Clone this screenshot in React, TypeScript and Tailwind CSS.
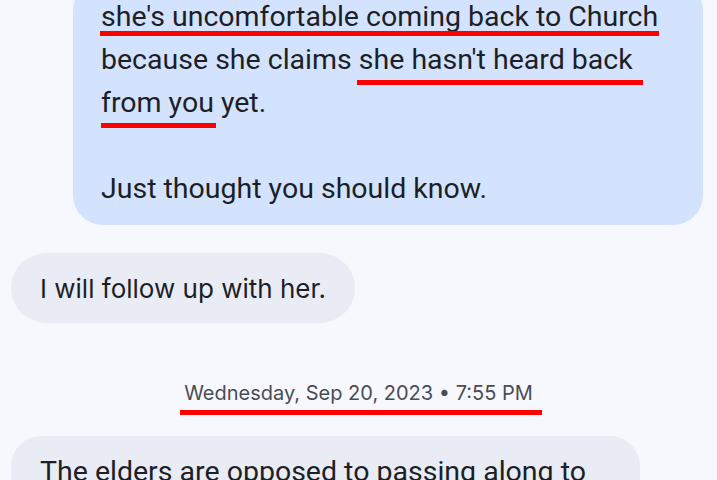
import React from "react";

const Bar = ({ className }: { className: string }) => (
  <span className={`absolute h-[5px] bg-[#ff0000] ${className}`} />
);

export default function App() {
  return (
    <div className="w-[717px] h-[480px] overflow-hidden bg-[#f7f8fd] text-[#1d1f26]">
      <div className="flex justify-end pr-[14px]">
        <div
          className="w-[630px] -mt-[20px] rounded-[30px] bg-[#d3e3fd] pl-[28px] pt-[15px] pb-[15px] text-[28.5px] leading-[43px]"
          style={{ fontFamily: "Roboto, sans-serif" }}
        >
          <div className="relative w-fit">
            she's uncomfortable coming back to Church
            <Bar className="left-[-1px] right-[-1px] top-[36px]" />
          </div>
          <div>
            because she claims{" "}
            <span className="relative">
              she hasn't heard back
              <Bar className="left-[-2px] right-[-10px] top-[37px]" />
            </span>
          </div>
          <div>
            <span className="relative">
              from you
              <Bar className="left-0 right-[-2px] top-[37px]" />
            </span>{" "}
            yet.
          </div>
          <div className="h-[43px]" />
          <div>Just thought you should know.</div>
        </div>
      </div>

      <div className="mt-[28px] pl-[11px]">
        <div
          className="inline-flex h-[70px] items-center rounded-full bg-[#e9ecf4] px-[29px] text-[26px]"
          style={{ fontFamily: "Inter, sans-serif" }}
        >
          I will follow up with her.
        </div>
      </div>

      <div className="mt-[58px] flex justify-center">
        <div
          className="relative text-[20px] leading-[24px] text-[#4a4c53]"
          style={{ fontFamily: "Inter, sans-serif" }}
        >
          Wednesday, Sep 20, 2023 • 7:55 PM
          <Bar className="left-[-4px] right-[-9px] top-[29px]" />
        </div>
      </div>

      <div className="mt-[31px] pl-[11px]">
        <div
          className="w-[629px] rounded-[30px] bg-[#e9ecf4] pl-[29px] pt-[14px] pb-[14px] text-[28.5px] leading-[43px]"
          style={{ fontFamily: "Roboto, sans-serif" }}
        >
          The elders are opposed to passing along to
        </div>
      </div>
    </div>
  );
}
